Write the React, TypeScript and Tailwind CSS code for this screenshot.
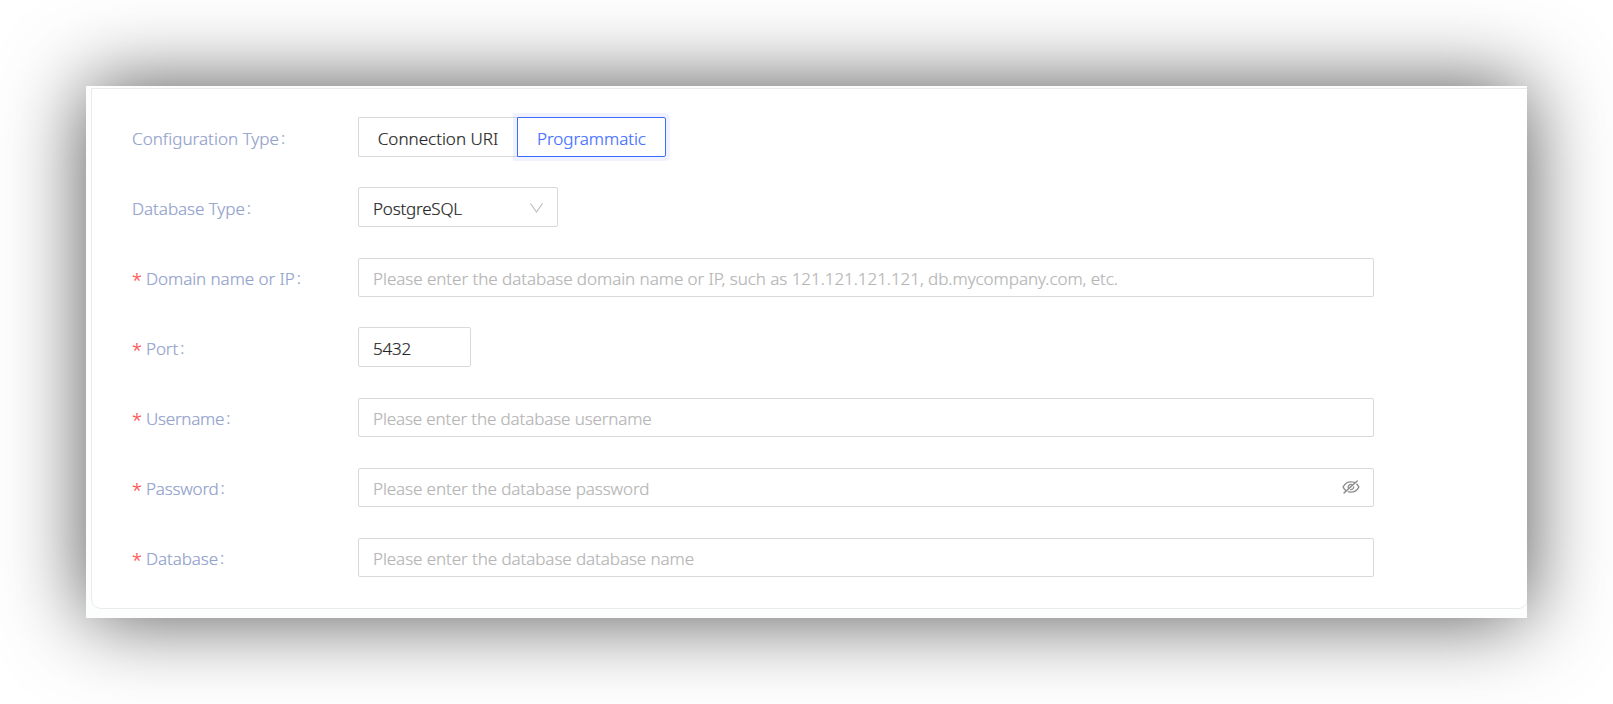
import React from 'react';

type LabelProps = { text: string; required?: boolean; tracking: string };

function Label({ text, required, tracking }: LabelProps) {
  return (
    <label className="flex h-[39px] w-[226px] shrink-0 items-center pt-[3px] text-[#93a2cc]">
      {required && (
        <span className="mr-[6px] h-[27px] w-[8px] text-[18px] leading-[31px] text-[#ff4d4f]">*</span>
      )}
      <span className={tracking}>{text}</span>
      <span className="mb-[2px] ml-[2px]">:</span>
    </label>
  );
}

type RowProps = LabelProps & { children: React.ReactNode };

function Row({ children, ...label }: RowProps) {
  return (
    <div className="flex h-[70px] items-start">
      <Label {...label} />
      {children}
    </div>
  );
}

const box = 'rounded-[2px] border border-[#d9d9d9] bg-white pt-[2px] outline-none placeholder:text-[#b5b5b5] placeholder:opacity-100';

function EyeOff() {
  return (
    <svg className="pointer-events-none absolute right-[13px] top-[10px] h-[18px] w-[20px]" preserveAspectRatio="none" viewBox="0 0 1024 1024" fill="#8c8c8c">
      <path d="M942.2 486.2Q889.47 375.11 816.7 305l-50.88 50.88C807.31 395.53 843.45 447.4 874.7 512 791.5 684.2 673.4 766 512 766q-72.67 0-133.87-22.38L323 798.75Q408 838 512 838q288.3 0 430.2-300.3a60.29 60.29 0 000-51.5zm-63.57-320.64L836 122.88a8 8 0 00-11.32 0L715.31 232.2Q624.86 186 512 186q-288.3 0-430.2 300.3a60.3 60.3 0 000 51.5q56.69 119.4 136.5 191.41L112.48 835a8 8 0 000 11.31L155.17 889a8 8 0 0011.31 0l712.15-712.12a8 8 0 000-11.32zM149.3 512C232.6 339.8 350.7 258 512 258c54.54 0 104.13 9.36 149.12 28.39l-70.3 70.3a176 176 0 00-238.13 238.13l-83.42 83.42C223.1 637.49 183.3 582.28 149.3 512zm246.7 0a112.11 112.11 0 01146.2-106.69L401.31 546.2A112 112 0 01396 512z" />
      <path d="M508 624c-3.46 0-6.87-.16-10.25-.47l-52.82 52.82a176.09 176.09 0 00227.42-227.42l-52.82 52.82c.31 3.38.47 6.79.47 10.25a111.94 111.94 0 01-112 112z" />
    </svg>
  );
}

export default function App() {
  return (
    <div className="h-[704px] w-[1613px] overflow-hidden bg-white px-[86px] pt-[86px] font-['Noto_Sans',sans-serif] text-[17px] font-light leading-[27px] [-webkit-text-stroke:0.2px]">
      <main className="h-[532px] w-[1441px] bg-white shadow-[0_0_77px_rgba(0,0,0,0.68)]">
        <div className="h-full overflow-hidden bg-[#fcfdfd] pl-[5px] pt-[2px]">
          <form className="h-[521px] w-[1437px] rounded-b-[10px] border border-[#ebebeb] bg-white pl-[40px] pt-[28px]">
            <Row text="Configuration Type" tracking="tracking-[0.04px]">
              <div className="flex h-[40px]">
                <button type="button" className="w-[159px] rounded-l-[2px] border border-r-0 border-[#d9d9d9] pt-[2px] text-[#262626]">
                  Connection URI
                </button>
                <button type="button" className="w-[149px] rounded-r-[2px] border border-[#3e6bff] pt-[2px] tracking-[-0.05px] text-[#3e6bff] shadow-[0_0_0_4px_rgba(62,107,255,0.08)]">
                  Programmatic
                </button>
              </div>
            </Row>
            <Row text="Database Type" tracking="tracking-[-0.05px]">
              <div className={`${box} flex h-[40px] w-[200px] items-center justify-between pl-[14px] pr-[14px] tracking-[-0.2px] text-[#262626]`}>
                <span>PostgreSQL</span>
                <svg className="size-[14px]" viewBox="0 0 14 14" fill="none" stroke="#bfbfbf" strokeWidth="1.2">
                  <path d="M1.5 2.5 7.5 11 13.5 2.5" />
                </svg>
              </div>
            </Row>
            <Row text="Domain name or IP" required tracking="tracking-[-0.06px]">
              <input
                className={`${box} mt-px h-[39px] w-[1016px] pl-[14px] tracking-[-0.045px]`}
                placeholder="Please enter the database domain name or IP, such as 121.121.121.121, db.mycompany.com, etc."
              />
            </Row>
            <Row text="Port" required tracking="tracking-[-0.1px]">
              <input className={`${box} h-[40px] w-[113px] pl-[14px] tracking-[-0.2px] text-[#262626]`} defaultValue="5432" />
            </Row>
            <Row text="Username" required tracking="tracking-[-0.25px]">
              <input className={`${box} mt-px h-[39px] w-[1016px] pl-[14px] tracking-[-0.13px]`} placeholder="Please enter the database username" />
            </Row>
            <Row text="Password" required tracking="tracking-[-0.2px]">
              <div className="relative mt-px h-[39px] w-[1016px]">
                <input type="password" className={`${box} block h-full w-full pl-[14px] tracking-[-0.09px]`} placeholder="Please enter the database password" />
                <EyeOff />
              </div>
            </Row>
            <Row text="Database" required tracking="tracking-[-0.1px]">
              <input className={`${box} mt-px h-[39px] w-[1016px] pl-[14px] tracking-[-0.08px]`} placeholder="Please enter the database database name" />
            </Row>
          </form>
        </div>
      </main>
    </div>
  );
}
